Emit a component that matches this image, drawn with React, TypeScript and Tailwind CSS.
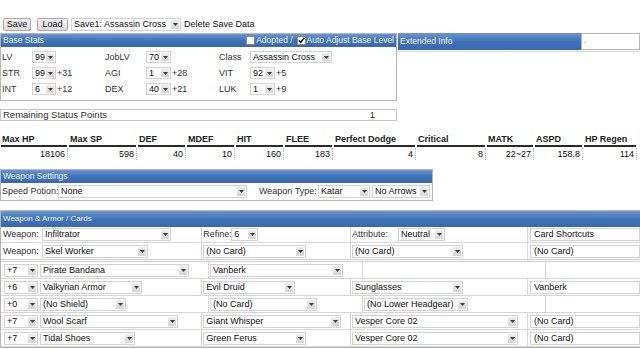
import React from "react";

function Tri() {
  return (
    <svg width="5" height="3" viewBox="0 0 5 3">
      <path d="M0 0H5L2.5 3Z" fill="#3a3a3a" />
    </svg>
  );
}

function Sel({ w, text, h = "h-[13px]" }: { w: string; text: string; h?: string }) {
  return (
    <div className={`${w} ${h} shrink-0 flex items-stretch border border-[#d2d2d2] bg-white`}>
      <span className="flex-1 pl-[2px] flex items-center whitespace-nowrap overflow-hidden text-[#111]">{text}</span>
      <span className="w-[8px] my-[1px] mr-[1px] bg-linear-to-b from-[#eeeeee] to-[#d5d5d5] flex items-center justify-center">
        <Tri />
      </span>
    </div>
  );
}

function Box({ text }: { text: string }) {
  return (
    <div className="w-[110px] h-[13px] shrink-0 flex items-center border border-[#d2d2d2] bg-white pl-[3px] text-[#111] whitespace-nowrap">
      {text}
    </div>
  );
}

function Check({ checked }: { checked?: boolean }) {
  return (
    <span className="w-[9px] h-[9px] bg-white border border-[#8a8a8a] flex items-center justify-center shrink-0">
      {checked && (
        <svg width="9" height="9" viewBox="0 0 9 9">
          <path d="M1 4.5L3.5 7L8 1" stroke="#000" strokeWidth="1.8" fill="none" />
        </svg>
      )}
    </span>
  );
}

const headerBlue = "bg-linear-to-b from-[#6c96cf] via-[#3f73b9] to-[#3868ae] text-[#f2f6fc]";

function StatRow({ l1, v1, b1, l2, v2, b2, l3, children }: any) {
  return (
    <div className="flex items-center h-[16px] whitespace-nowrap">
      <span className="w-[31px] pl-[1px] text-[#333]">{l1}</span>
      <div className="w-[73px] flex items-center">
        <Sel w="w-[24px]" h="h-[12px]" text={v1} />
        {b1 && <span className="ml-[1px] text-[#333]">{b1}</span>}
      </div>
      <span className="w-[41px] text-[#333]">{l2}</span>
      <div className="w-[73px] flex items-center">
        <Sel w="w-[25px]" h="h-[12px]" text={v2} />
        {b2 && <span className="ml-[1px] text-[#333]">{b2}</span>}
      </div>
      <span className="w-[31px] text-[#333]">{l3}</span>
      <div className="flex items-center">{children}</div>
    </div>
  );
}

const stats: [string, string, string][] = [
  ["Max HP", "18106", "w-[68px]"],
  ["Max SP", "598", "w-[69px]"],
  ["DEF", "40", "w-[49px]"],
  ["MDEF", "10", "w-[49px]"],
  ["HIT", "160", "w-[49px]"],
  ["FLEE", "183", "w-[49px]"],
  ["Perfect Dodge", "4", "w-[83px]"],
  ["Critical", "8", "w-[70px]"],
  ["MATK", "22~27", "w-[48px]"],
  ["ASPD", "158.8", "w-[49px]"],
  ["HP Regen", "114", "w-[54px]"],
];

const cellB = "border-r border-b border-[#d6d6d6]";

export default function App() {
  return (
    <div className="w-[640px] h-[349px] overflow-hidden bg-white font-['Liberation_Sans',Arial,sans-serif] text-[9px] leading-none text-[#222] whitespace-nowrap">
      {/* top bar */}
      <div className="flex items-center pt-[18px] pl-[3px]">
        <button className="w-[28px] h-[13px] border border-[#a9a9a9] rounded-[2px] bg-linear-to-b from-[#f7f7f7] to-[#dcdcdc] text-[#111] flex items-center justify-center">
          Save
        </button>
        <button className="ml-[6px] w-[31px] h-[13px] border border-[#a9a9a9] rounded-[2px] bg-linear-to-b from-[#f7f7f7] to-[#dcdcdc] text-[#111] flex items-center justify-center">
          Load
        </button>
        <div className="ml-[3px]">
          <Sel w="w-[110px]" text="Save1: Assassin Cross" />
        </div>
        <span className="ml-[3px] text-[#111]">Delete Save Data</span>
      </div>

      {/* base stats + extended */}
      <div className="flex items-start mt-[2px]">
        <div className="w-[397px] border border-[#b6b6b6]">
          <div className={`h-[13px] flex items-center justify-between px-[2px] ${headerBlue} text-[8.5px]`}>
            <span>Base Stats</span>
            <span className="flex items-center gap-[1px]">
              <Check />
              <span className="mr-[3px]">Adopted /</span>
              <Check checked />
              <span>Auto Adjust Base Level</span>
            </span>
          </div>
          <div className="pt-[2px] pb-[3px]">
            <StatRow l1="LV" v1="99" l2="JobLV" v2="70" l3="Class">
              <Sel w="w-[82px]" h="h-[12px]" text="Assassin Cross" />
            </StatRow>
            <StatRow l1="STR" v1="99" b1="+31" l2="AGI" v2="1" b2="+28" l3="VIT">
              <Sel w="w-[25px]" h="h-[12px]" text="92" />
              <span className="ml-[1px] text-[#333]">+5</span>
            </StatRow>
            <StatRow l1="INT" v1="6" b1="+12" l2="DEX" v2="40" b2="+21" l3="LUK">
              <Sel w="w-[25px]" h="h-[12px]" text="1" />
              <span className="ml-[1px] text-[#333]">+9</span>
            </StatRow>
          </div>
        </div>
        <div className="ml-[1px] flex-1">
          <div className="flex h-[17px]">
            <div className={`w-[183px] flex items-center pl-[2px] text-[8.5px] ${headerBlue}`}>Extended Info</div>
            <div className="flex-1 border border-[#b6b6b6] bg-white flex items-center pl-[2px] text-[#666] text-[7px]">-</div>
          </div>
          <div className="h-[1px] mt-[1px] bg-[#d8d8d8]" />
        </div>
      </div>

      {/* remaining */}
      <div className="mt-[8px] w-[397px] h-[12px] border border-[#c4c4c4] flex items-center justify-between pl-[2px] pr-[21px] text-[#333] text-[9.5px]">
        <span>Remaining Status Points</span>
        <span>1</span>
      </div>

      {/* stats table */}
      <div className="mt-[12px] flex">
        {stats.map(([h, v, w]) => (
          <div key={h} className={`${w} flex flex-col`}>
            <div className="h-[14px] ml-[1px] mr-[1px] border-b-2 border-[#2a2a2a] pl-[1px] flex items-center font-bold text-[#222]">
              {h}
            </div>
            <div className="h-[12px] mt-[1px] border-r border-dotted border-[#b8b8b8] pr-[2px] flex items-center justify-end text-[#111]">
              {v}
            </div>
          </div>
        ))}
      </div>

      {/* weapon settings */}
      <div className="mt-[9px] w-[433px] border border-[#b6b6b6]">
        <div className={`h-[13px] flex items-center pl-[2px] text-[8.5px] ${headerBlue}`}>Weapon Settings</div>
        <div className="h-[17px] flex items-center pl-[1px]">
          <span className="w-[56px] text-[#333]">Speed Potion:</span>
          <Sel w="w-[189px]" text="None" />
          <span className="ml-[12px] w-[59px] text-[#333]">Weapon Type:</span>
          <Sel w="w-[52px]" text="Katar" />
          <div className="ml-[2px]">
            <Sel w="w-[58px]" text="No Arrows" />
          </div>
        </div>
      </div>

      {/* weapon & armor */}
      <div className="mt-[9px] w-[640px] border border-r-0 border-[#b6b6b6]">
        <div className={`h-[16px] flex items-center pl-[2px] text-[8px] ${headerBlue}`}>Weapon &amp; Armor / Cards</div>
        {/* row 1 */}
        <div className="flex h-[16px]">
          <div className={`w-[208px] ${cellB} flex items-center pl-[2px]`}>
            <span className="w-[39px] text-[#333]">Weapon:</span>
            <Sel w="w-[129px]" text="Infiltrator" />
          </div>
          <div className={`w-[154px] ${cellB} flex items-center pl-[1px]`}>
            <span className="w-[28px] text-[#333]">Refine:</span>
            <Sel w="w-[27px]" text="6" />
          </div>
          <div className={`w-[183px] ${cellB} flex items-center pl-[1px]`}>
            <span className="w-[46px] text-[#333]">Attribute:</span>
            <Sel w="w-[47px]" text="Neutral" />
          </div>
          <div className="flex-1 border-b border-[#d6d6d6] flex items-center pl-[2px]">
            <Box text="Card Shortcuts" />
          </div>
        </div>
        {/* row 2 */}
        <div className="flex h-[19px] border-b-[3px] border-double border-[#cfcfcf]">
          <div className="w-[208px] border-r border-[#d6d6d6] flex items-center pl-[2px]">
            <span className="w-[39px] text-[#333]">Weapon:</span>
            <Sel w="w-[106px]" text="Skel Worker" />
          </div>
          <div className="w-[154px] border-r border-[#d6d6d6] flex items-center pl-[1px]">
            <Sel w="w-[103px]" text="(No Card)" />
          </div>
          <div className="w-[183px] border-r border-[#d6d6d6] flex items-center pl-[1px]">
            <Sel w="w-[111px]" text="(No Card)" />
          </div>
          <div className="flex-1 flex items-center pl-[2px]">
            <Box text="(No Card)" />
          </div>
        </div>
        {[
          ["+7", "Pirate Bandana", "w-[149px]", "Vanberk", "w-[133px]", "", "", ""],
          ["+6", "Valkyrian Armor", "w-[102px]", "Evil Druid", "w-[92px]", "Sunglasses", "w-[111px]", "Vanberk"],
          ["+0", "(No Shield)", "w-[86px]", "(No Card)", "w-[107px]", "(No Lower Headgear)", "w-[104px]", ""],
          ["+7", "Wool Scarf", "w-[138px]", "Giant Whisper", "w-[138px]", "Vesper Core 02", "w-[166px]", "(No Card)"],
          ["+7", "Tidal Shoes", "w-[95px]", "Green Ferus", "w-[103px]", "Vesper Core 02", "w-[166px]", "(No Card)"],
        ].map((r, i) => (
          <div key={i} className="flex h-[17px]">
            <div className={`w-[208px] ${cellB} flex items-center pl-[3px]`}>
              <Sel w="w-[34px]" text={r[0]} />
              <div className="ml-[2px]">
                <Sel w={r[2]} text={r[1]} />
              </div>
            </div>
            <div className={`w-[154px] ${cellB} flex items-center pl-[1px]`}>
              <Sel w={r[4]} text={r[3]} />
            </div>
            <div className={`w-[183px] ${cellB} flex items-center pl-[1px]`}>
              {r[5] && <Sel w={r[6]} text={r[5]} />}
            </div>
            <div className="flex-1 border-b border-[#d6d6d6] flex items-center pl-[2px]">
              {r[7] && <Box text={r[7]} />}
            </div>
          </div>
        ))}
      </div>
    </div>
  );
}
